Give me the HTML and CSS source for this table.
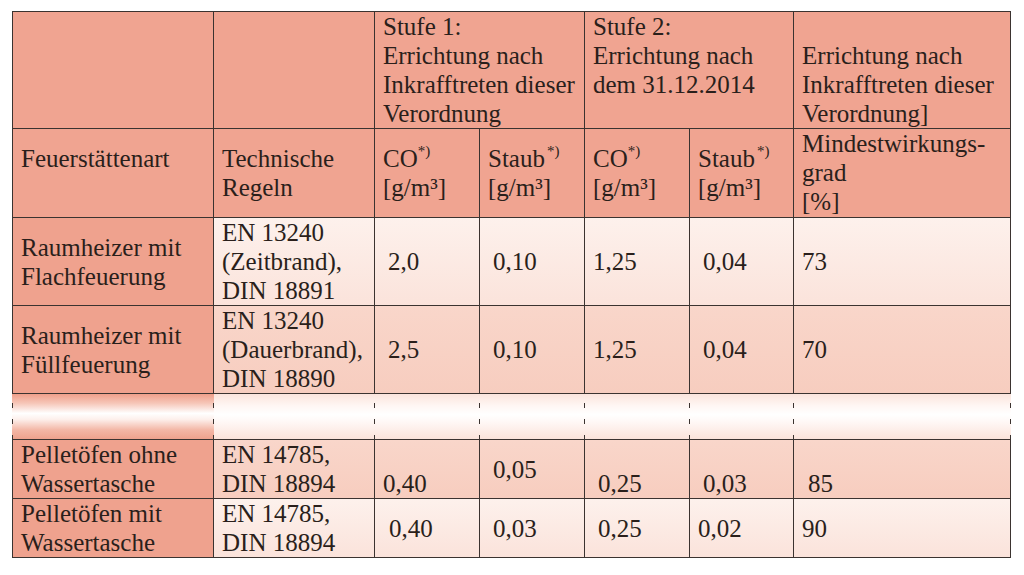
FILE: index.html
```html
<!DOCTYPE html>
<html lang="de">
<head>
<meta charset="utf-8">
<title>Feuerstätten Grenzwerte</title>
<link rel="stylesheet" href="styles.css">
</head>
<body>
<table class="grid">
  <colgroup>
    <col class="c1"><col class="c2"><col class="c3"><col class="c4"><col class="c5"><col class="c6"><col class="c7">
  </colgroup>
  <tr class="h1">
    <td class="first"></td>
    <td></td>
    <td colspan="2" class="top">Stufe 1:<br>Errichtung nach<br>Inkrafftreten dieser<br>Verordnung</td>
    <td colspan="2" class="top">Stufe 2:<br>Errichtung nach<br>dem 31.12.2014</td>
    <td class="bottom">Errichtung nach<br>Inkrafftreten dieser<br>Verordnung]</td>
  </tr>
  <tr class="h2">
    <td class="first lift">Feuerstättenart</td>
    <td>Technische<br>Regeln</td>
    <td>CO<sup>*)</sup><br>[g/m³]</td>
    <td>Staub<sup class="gap">*)</sup><br>[g/m³]</td>
    <td>CO<sup>*)</sup><br>[g/m³]</td>
    <td>Staub<sup class="gap">*)</sup><br>[g/m³]</td>
    <td class="top">Mindestwirkungs-<br>grad<br>[%]</td>
  </tr>
  <tr class="r light">
    <td class="first name">Raumheizer mit<br>Flachfeuerung</td>
    <td class="top">EN 13240<br>(Zeitbrand),<br>DIN 18891</td>
    <td class="ind">2,0</td>
    <td class="ind">0,10</td>
    <td>1,25</td>
    <td class="ind">0,04</td>
    <td>73</td>
  </tr>
  <tr class="r mid">
    <td class="first name">Raumheizer mit<br>Füllfeuerung</td>
    <td class="top">EN 13240<br>(Dauerbrand),<br>DIN 18890</td>
    <td class="ind">2,5</td>
    <td class="ind">0,10</td>
    <td>1,25</td>
    <td class="ind">0,04</td>
    <td>70</td>
  </tr>
  <tr class="skip">
    <td class="first"></td>
    <td></td>
    <td></td>
    <td></td>
    <td></td>
    <td></td>
    <td></td>
  </tr>
  <tr class="p mid">
    <td class="first name top">Pelletöfen ohne<br>Wassertasche</td>
    <td class="top">EN 14785,<br>DIN 18894</td>
    <td class="bottom">0,40</td>
    <td class="ind">0,05</td>
    <td class="ind bottom">0,25</td>
    <td class="ind bottom">0,03</td>
    <td class="ind2 bottom">85</td>
  </tr>
  <tr class="p light">
    <td class="first name top">Pelletöfen mit<br>Wassertasche</td>
    <td class="top">EN 14785,<br>DIN 18894</td>
    <td class="ind2">0,40</td>
    <td class="ind">0,03</td>
    <td class="ind">0,25</td>
    <td>0,02</td>
    <td>90</td>
  </tr>
</table>
</body>
</html>
```

FILE: styles.css
```css
html, body {
  margin: 0;
  padding: 0;
  background: #ffffff;
}

body, .grid, .grid td {
  font-family: "Liberation Serif", Tinos, "Times New Roman", "Nimbus Roman", "DejaVu Serif", serif;
}

body {
  font-size: 25px;
  line-height: 29px;
  color: #2a1f1b;
}

.grid {
  border-collapse: separate;
  border-spacing: 0;
  table-layout: fixed;
  width: 999px;
  margin: 11px 0 0 12px;
  font-size: 25px;
  line-height: 29px;
}

.c1 { width: 202px; }
.c2 { width: 161px; }
.c3 { width: 105px; }
.c4 { width: 105px; }
.c5 { width: 105px; }
.c6 { width: 104px; }
.c7 { width: 217px; }

.grid td {
  padding: 0 4px 0 8px;
  border-right: 1px solid #3b3330;
  border-bottom: 1px solid #3b3330;
  vertical-align: middle;
  white-space: nowrap;
  overflow: hidden;
}

.grid td.first {
  border-left: 1px solid #3b3330;
}

.grid td.top { vertical-align: top; }
.grid td.bottom { vertical-align: bottom; }
.grid td.ind { padding-left: 13px; }
.grid td.ind2 { padding-left: 14px; }

.h1 td {
  border-top: 1px solid #3b3330;
}

.h1 { height: 118px; }
.h2 { height: 89px; }
.r { height: 88px; }
.skip { height: 46px; }
.p { height: 59px; }

.h1 td, .h2 td {
  background: #f0a491;
}

.h2 td.lift {
  padding-bottom: 29px;
}

sup {
  font-size: 15px;
  line-height: 0;
  vertical-align: 11px;
}

sup.gap { margin-left: 2px; }

.light td {
  background: linear-gradient(to bottom, #fdf1ec, #fbe3db);
}

.mid td {
  background: linear-gradient(to bottom, #f9d6ca, #f7cdbf);
}

.grid tr td.name {
  background: #efa28e;
}

.p td.name {
  background: #ee9f8a;
}

.skip td {
  border-right-color: transparent;
  background-origin: border-box;
  background-repeat: no-repeat;
  background-image:
    repeating-linear-gradient(to bottom, transparent 0 9px, #3b3330 9px 14px, transparent 14px 16px),
    linear-gradient(to bottom, #fbe4dc 0%, #fff6f3 25%, #ffffff 45%, #fff8f6 60%, #fbe2d9 100%);
  background-size: 1px 100%, 100% 100%;
  background-position: right top, 0 0;
}

.skip td.first {
  border-left-color: transparent;
  background-image:
    repeating-linear-gradient(to bottom, transparent 0 9px, #3b3330 9px 14px, transparent 14px 16px),
    repeating-linear-gradient(to bottom, transparent 0 9px, #3b3330 9px 14px, transparent 14px 16px),
    linear-gradient(to bottom, #ef9f8a 0%, #f6c6b8 20%, #ffffff 42%, #fdf0ec 55%, #f3b7a6 78%, #ee9f8a 100%);
  background-size: 1px 100%, 1px 100%, 100% 100%;
  background-position: right top, left top, 0 0;
}
```
